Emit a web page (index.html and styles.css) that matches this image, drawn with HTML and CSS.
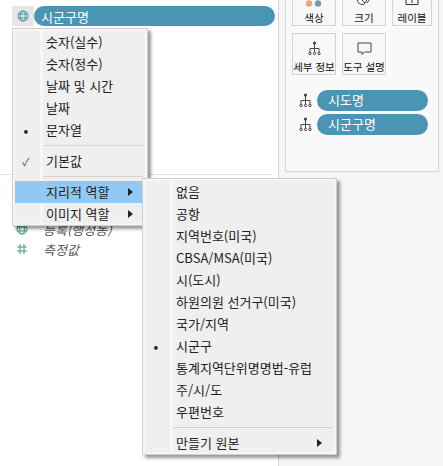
FILE: index.html
```html
<!DOCTYPE html>
<html lang="ko">
<head>
    <meta charset="UTF-8">
    <title>지리적 역할</title>
    <link rel="stylesheet" href="styles.css">
</head>
<body>

<div id="app">
    <div class="data-pane">
        <div class="field-row">
            <div class="field-icon">
                <svg width="12" height="12" viewBox="0 0 12 12" fill="none" stroke="#4a8fa8"><circle cx="6" cy="6" r="5"/><ellipse cx="6" cy="6" rx="2.4" ry="5"/><path d="M1 4h10M1 8h10"/></svg>
            </div>
            <div class="pill pill-wide">시군구명</div>
        </div>
        <div class="pane-rule"></div>
        <div class="measure-row measure-first">
            <svg width="12" height="12" viewBox="0 0 12 12" fill="none" stroke="#3f9c7c"><circle cx="6" cy="6" r="5"/><ellipse cx="6" cy="6" rx="2.4" ry="5"/><path d="M1 4h10M1 8h10"/></svg>
            <span>등록(행정동)</span>
        </div>
        <div class="measure-row">
            <svg width="12" height="12" viewBox="0 0 12 12" fill="none" stroke="#3f9c7c"><path d="M4 1v10M8 1v10M1 4h10M1 8h10"/></svg>
            <span>측정값</span>
        </div>
    </div>

    <div class="side-pane">
        <div class="marks-card">
            <div class="mark-grid">
                <div class="mark-btn">
                    <div class="mark-icon">
                        <svg width="20" height="8" viewBox="0 0 20 8"><circle cx="5" cy="4.500" r="3.200" fill="#f0a27f"/><circle cx="14" cy="4.500" r="3.200" fill="#6f9db0"/></svg>
                    </div>
                    <span>색상</span>
                </div>
                <div class="mark-btn">
                    <div class="mark-icon">
                        <svg width="16" height="8" viewBox="0 0 16 8" fill="none" stroke="#444"><circle cx="6" cy="1" r="4.500"/><path d="M3 -2l6 6M11 4l3-4"/></svg>
                    </div>
                    <span>크기</span>
                </div>
                <div class="mark-btn mark-narrow">
                    <div class="mark-icon">
                        <svg width="14" height="8" viewBox="0 0 14 8" fill="none" stroke="#333"><path d="M1 0v5.500h12V0M7 0v4"/></svg>
                    </div>
                    <span>레이블</span>
                </div>
                <div class="mark-btn">
                    <div class="mark-icon">
                        <svg class="tree" width="13" height="15" viewBox="0 0 13 15" fill="none" stroke="#444"><circle cx="6.500" cy="2" r="1.600" fill="#444" stroke="none"/><path d="M6.500 3v8M2 11V7.500h9V11"/><circle cx="2" cy="12.500" r="1.200"/><circle cx="6.500" cy="12.500" r="1.200"/><circle cx="11" cy="12.500" r="1.200"/></svg>
                    </div>
                    <span>세부 정보</span>
                </div>
                <div class="mark-btn">
                    <div class="mark-icon">
                        <svg width="15" height="14" viewBox="0 0 15 14" fill="none" stroke="#444"><path d="M1 1h13v9H7.500L5 12.500V10H1z"/></svg>
                    </div>
                    <span>도구 설명</span>
                </div>
            </div>
            <div class="level-list">
                <div class="level-row">
                    <svg class="tree" width="13" height="15" viewBox="0 0 13 15" fill="none" stroke="#444"><circle cx="6.500" cy="2" r="1.600" fill="#444" stroke="none"/><path d="M6.500 3v8M2 11V7.500h9V11"/><circle cx="2" cy="12.500" r="1.200"/><circle cx="6.500" cy="12.500" r="1.200"/><circle cx="11" cy="12.500" r="1.200"/></svg>
                    <div class="pill pill-level">시도명</div>
                </div>
                <div class="level-row">
                    <svg class="tree" width="13" height="15" viewBox="0 0 13 15" fill="none" stroke="#444"><circle cx="6.500" cy="2" r="1.600" fill="#444" stroke="none"/><path d="M6.500 3v8M2 11V7.500h9V11"/><circle cx="2" cy="12.500" r="1.200"/><circle cx="6.500" cy="12.500" r="1.200"/><circle cx="11" cy="12.500" r="1.200"/></svg>
                    <div class="pill pill-level">시군구명</div>
                </div>
            </div>
        </div>
    </div>
</div>

<div class="menu menu-type">
    <div class="item"><span class="mark"></span>숫자(실수)</div>
    <div class="item"><span class="mark"></span>숫자(정수)</div>
    <div class="item"><span class="mark"></span>날짜 및 시간</div>
    <div class="item"><span class="mark"></span>날짜</div>
    <div class="item"><span class="mark">•</span>문자열</div>
    <div class="sep"></div>
    <div class="item"><span class="mark mark-check">✓</span>기본값</div>
    <div class="sep"></div>
    <div class="item active"><span class="mark"></span>지리적 역할<span class="arrow"></span></div>
    <div class="item"><span class="mark"></span>이미지 역할<span class="arrow"></span></div>
</div>

<div class="menu menu-geo">
    <div class="item"><span class="mark"></span>없음</div>
    <div class="item"><span class="mark"></span>공항</div>
    <div class="item"><span class="mark"></span>지역번호(미국)</div>
    <div class="item"><span class="mark"></span>CBSA/MSA(미국)</div>
    <div class="item"><span class="mark"></span>시(도시)</div>
    <div class="item"><span class="mark"></span>하원의원 선거구(미국)</div>
    <div class="item"><span class="mark"></span>국가/지역</div>
    <div class="item"><span class="mark">•</span>시군구</div>
    <div class="item"><span class="mark"></span>통계지역단위명명법-유럽</div>
    <div class="item"><span class="mark"></span>주/시/도</div>
    <div class="item"><span class="mark"></span>우편번호</div>
    <div class="sep"></div>
    <div class="item"><span class="mark"></span>만들기 원본<span class="arrow"></span></div>
</div>

</body>
</html>
```

FILE: styles.css
```css
body {
    margin: 0;
    font-family: "Noto Sans CJK KR", "Noto Sans", sans-serif;
    font-size: 13px;
    color: #222;
    background-color: white;
    overflow: hidden;
}
#app {
    display: flex;
    height: 466px;
}
.data-pane {
    width: 278px;
    padding-top: 6px;
    box-sizing: border-box;
}
.field-row {
    display: flex;
    margin-left: 12px;
    width: 263px;
    height: 20px;
}
.field-icon {
    width: 22px;
    display: flex;
    align-items: center;
    justify-content: center;
    background-color: #e6e6e6;
}
.pill {
    background-color: #4a95b3;
    color: white;
    border-radius: 11px;
    font-size: 13px;
    padding-left: 11px;
    display: flex;
    align-items: center;
}
.pill-wide {
    flex: 1;
    padding-left: 7px;
}
.pane-rule {
    height: 1px;
    width: 272px;
    margin-top: 148px;
    background-color: #e0e0e0;
}
.measure-row {
    display: flex;
    align-items: center;
    gap: 15px;
    padding-left: 16px;
    height: 20px;
    font-style: italic;
    color: #555;
}
.measure-first {
    margin-top: 44px;
}
.side-pane {
    flex: 1;
    background-color: #f5f5f5;
    border-left: 1px solid #d4d4d4;
    padding-left: 6px;
    padding-right: 4px;
}
.marks-card {
    height: 189px;
    margin-top: -17px;
    border: 1px solid #d4d4d4;
    background-color: #f9f9f9;
    box-sizing: border-box;
    padding: 0 6px;
}
.mark-grid {
    display: flex;
    flex-wrap: wrap;
    gap: 7px 6px;
}
.mark-btn {
    width: 44px;
    height: 42px;
    box-sizing: border-box;
    border: 1px solid #d4d4d4;
    background-color: #f7f7f7;
    font-size: 10.500px;
    text-align: center;
    color: #111;
    white-space: nowrap;
    overflow: hidden;
}
.mark-btn span {
    display: block;
    line-height: 16px;
    margin-top: 3px;
}
.mark-narrow {
    width: 40px;
}
.mark-icon {
    height: 22px;
    display: flex;
    align-items: flex-end;
    justify-content: center;
}
.level-list {
    margin-top: 15px;
    padding-left: 7px;
    display: flex;
    flex-direction: column;
    gap: 3px;
}
.level-row {
    display: flex;
    align-items: center;
    gap: 5px;
    height: 21px;
}
.pill-level {
    width: 111px;
    height: 21px;
    box-sizing: border-box;
    padding-bottom: 3px;
}
.menu {
    position: absolute;
    box-sizing: border-box;
    background-color: #efefef;
    background-image: linear-gradient(#f6f6f6, #f6f6f6);
    background-repeat: no-repeat;
    background-size: 3px 100%;
    background-position: 27px 0;
    border: 1px solid #d0d0d0;
    outline: 2px solid #f5f5f5;
    outline-offset: -3px;
    padding: 2px;
    box-shadow: 3px 3px 3px rgba(0, 0, 0, 0.4);
}
.menu-type {
    left: 12px;
    top: 28px;
    width: 136px;
    height: 198px;
}
.menu-geo {
    left: 142px;
    top: 178px;
    width: 195px;
    height: 277px;
}
.item {
    display: flex;
    align-items: center;
    height: 22px;
    box-sizing: border-box;
    padding-bottom: 1px;
    position: relative;
    white-space: nowrap;
}
.mark {
    width: 22px;
    margin-right: 9px;
    text-align: center;
    font-size: 14px;
}
.mark-check {
    font-size: 11px;
    color: #555;
}
.active {
    background-color: #90c8f6;
}
.arrow {
    position: absolute;
    right: 12px;
    width: 0;
    height: 0;
    border-left: 5px solid #222;
    border-top: 4px solid transparent;
    border-bottom: 4px solid transparent;
}
.sep {
    height: 1px;
    margin: 4px 2px 4px 28px;
    background-color: #d4d4d4;
}
```
